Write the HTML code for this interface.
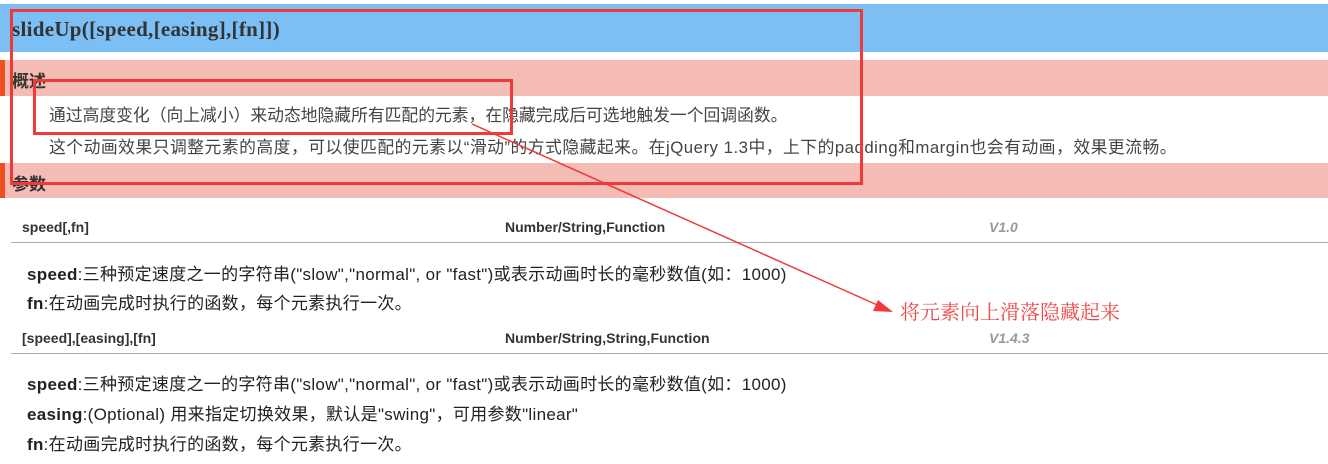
<!DOCTYPE html><html><head><meta charset="utf-8"><style>
body{margin:0;width:1328px;height:464px;background:#fff;position:relative;overflow:hidden;font-family:"Liberation Sans","Noto Sans CJK SC",sans-serif}
.a{position:absolute;white-space:nowrap}
</style></head><body>
<div class="a" style="left:0;top:4px;width:1328px;height:48px;background:#7bbff4"></div>
<div class="a" style="left:12px;top:17px;font:bold 21px 'Liberation Serif','Noto Serif CJK SC',serif;color:#333;letter-spacing:0.3px">slideUp([speed,[easing],[fn]])</div>
<div class="a" style="left:0;top:60px;width:1328px;height:36px;background:#f4bcb4"></div>
<div class="a" style="left:0;top:60px;width:5px;height:36px;background:#f05020"></div>
<div class="a" style="left:12px;top:67px;font:bold 17px 'Noto Sans CJK SC',sans-serif;color:#333">概述</div>
<div class="a" style="left:49px;top:102px;font-size:16.8px;color:#444">通过高度变化（向上减小）来动态地隐藏所有匹配的元素，在隐藏完成后可选地触发一个回调函数。</div>
<div class="a" style="left:49px;top:134px;font-size:16.8px;color:#444;letter-spacing:0.5px">这个动画效果只调整元素的高度，可以使匹配的元素以“滑动”的方式隐藏起来。在jQuery 1.3中，上下的padding和margin也会有动画，效果更流畅。</div>
<div class="a" style="left:0;top:163px;width:1328px;height:35px;background:#f4bcb4"></div>
<div class="a" style="left:0;top:163px;width:5px;height:35px;background:#f05020"></div>
<div class="a" style="left:12px;top:170px;font:bold 17px 'Noto Sans CJK SC',sans-serif;color:#333">参数</div>

<div class="a" style="left:22px;top:219px;font:bold 14px 'Liberation Sans',sans-serif;color:#333">speed[,fn]</div>
<div class="a" style="left:505px;top:219px;font:bold 14px 'Liberation Sans',sans-serif;color:#333">Number/String,Function</div>
<div class="a" style="left:989px;top:219px;font:italic bold 14px 'Liberation Sans',sans-serif;color:#999">V1.0</div>
<div class="a" style="left:11px;top:242px;width:1317px;height:1px;background:#aaa"></div>
<div class="a" style="left:27px;top:260px;font-size:17px;color:#222;letter-spacing:0.3px"><b>speed</b>:三种预定速度之一的字符串("slow","normal", or "fast")或表示动画时长的毫秒数值(如：1000)</div>
<div class="a" style="left:27px;top:289px;font-size:17px;color:#222;letter-spacing:0.3px"><b>fn</b>:在动画完成时执行的函数，每个元素执行一次。</div>

<div class="a" style="left:22px;top:330px;font:bold 14px 'Liberation Sans',sans-serif;color:#333">[speed],[easing],[fn]</div>
<div class="a" style="left:505px;top:330px;font:bold 14px 'Liberation Sans',sans-serif;color:#333">Number/String,String,Function</div>
<div class="a" style="left:989px;top:330px;font:italic bold 14px 'Liberation Sans',sans-serif;color:#999">V1.4.3</div>
<div class="a" style="left:11px;top:353px;width:1317px;height:1px;background:#aaa"></div>
<div class="a" style="left:27px;top:370px;font-size:17px;color:#222;letter-spacing:0.3px"><b>speed</b>:三种预定速度之一的字符串("slow","normal", or "fast")或表示动画时长的毫秒数值(如：1000)</div>
<div class="a" style="left:27px;top:400px;font-size:17px;color:#222;letter-spacing:0.3px"><b>easing</b>:(Optional) 用来指定切换效果，默认是"swing"，可用参数"linear"</div>
<div class="a" style="left:27px;top:430px;font-size:17px;color:#222;letter-spacing:0.3px"><b>fn</b>:在动画完成时执行的函数，每个元素执行一次。</div>

<div class="a" style="left:10px;top:9px;width:847px;height:170px;border:3px solid #f03a3a"></div>
<div class="a" style="left:33px;top:79px;width:474px;height:50px;border:3px solid #f03a3a"></div>
<svg class="a" style="left:0;top:0" width="1328" height="464"><line x1="472" y1="124" x2="884" y2="308" stroke="#f03a3a" stroke-width="1.5"/><polygon points="893,312 878,300 873,311" fill="#f03a3a"/></svg>
<div class="a" style="left:900px;top:296px;font:20px 'Noto Serif CJK SC',serif;color:#f04848">将元素向上滑落隐藏起来</div>
</body></html>
